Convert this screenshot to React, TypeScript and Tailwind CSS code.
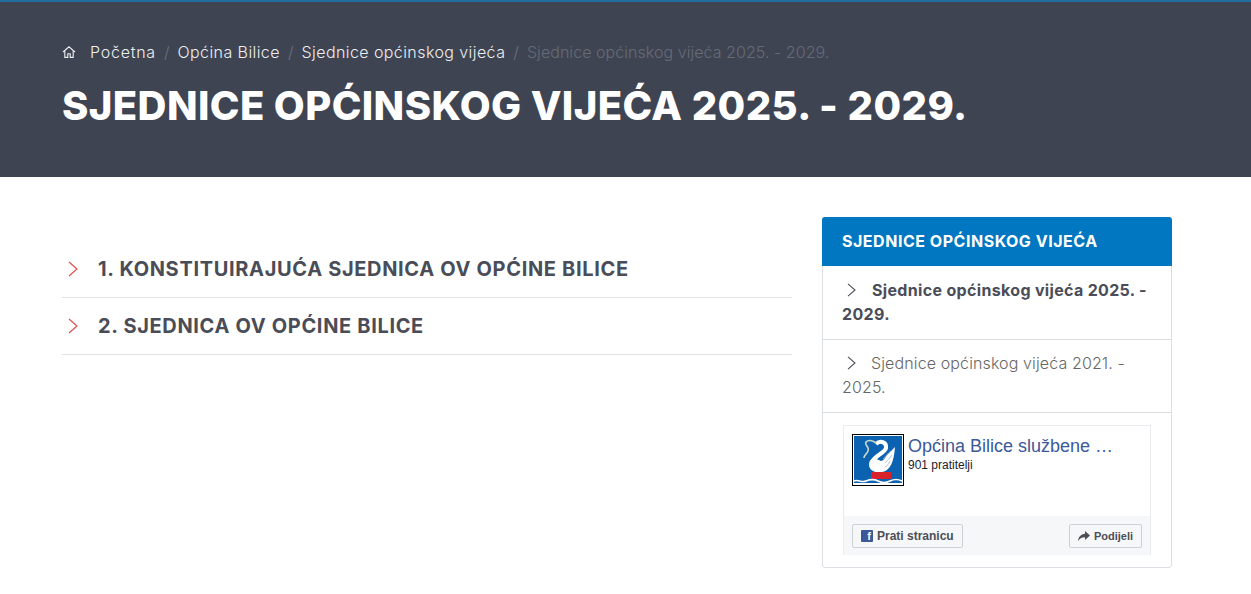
const font = "font-['Inter','Liberation_Sans',sans-serif]";

function Chevron({ className }: { className: string }) {
  return (
    <svg viewBox="0 0 10 16" fill="none" stroke="currentColor" strokeWidth="1.2" className={className}>
      <path d="M1 1l8 7-8 7" />
    </svg>
  );
}

function HomeIcon() {
  return (
    <svg viewBox="0 0 14 14" fill="none" stroke="currentColor" strokeWidth="1.1" className="w-[14px] h-[14px] mr-[14px]">
      <path d="M1 7l6-5.2L13 7M2.8 6v6.4h3v-3.600h2.400v3.600h3V6" />
    </svg>
  );
}

function Swan() {
  return (
    <svg viewBox="0 0 52 52" className="w-[52px] h-[52px] shrink-0">
      <rect width="52" height="52" fill="#000" />
      <rect x="1" y="1" width="50" height="50" fill="#fff" />
      <rect x="2" y="2" width="48" height="47" fill="#0b62b0" />
      <path d="M24 10C28 6 35 8 34 14C33 19 22 22 20 28" fill="none" stroke="#fff" strokeWidth="4" />
      <path d="M17 30C17 38 25 39 30 38C38 37 42 28 43 13C40 16 37 19 35 21C33 24 31 27 29 27C26 26 24 24 22 24C19 25 17 27 17 30Z" fill="#fff" />
      <path d="M31 25c2-2 5-6 8-8M33 29c2-2 5-5 7-8M33 33c2-1 4-3 5-6" fill="none" stroke="#9fb4cc" strokeWidth="0.8" />
      <path d="M24 9C20 6 16 6 14 8C12 11 18 13 16 17C15 20 12 21 12 24" fill="none" stroke="#c9d6c8" strokeWidth="1.6" />
      <rect x="19" y="38" width="20" height="7" fill="#d8232a" />
      <path d="M2 47c4-2 7 2 12 0s8-2 12 0 8 2 12 0 8-2 12 0" fill="none" stroke="#fff" strokeWidth="1.6" />
    </svg>
  );
}

const crumbs = ["Općina Bilice", "Sjednice općinskog vijeća"];
const rows = ["1. KONSTITUIRAJUĆA SJEDNICA OV OPĆINE BILICE", "2. SJEDNICA OV OPĆINE BILICE"];

export default function App() {
  return (
    <div className={`${font} min-h-[594px] bg-white`}>
      <header className="h-[177px] bg-[#3f4452] border-t-2 border-[#1f6d9c] pl-[62px] pt-[39px]">
        <nav className="flex items-center h-[22px] text-[16px] font-light text-[#eceef0]">
          <HomeIcon />
          <span className="tracking-[0.75px]">Početna</span>
          {crumbs.map((c) => (
            <span key={c} className="flex">
              <span className="px-[8px] text-[#6c707b]">/</span>
              <span className="tracking-[0.42px]">{c}</span>
            </span>
          ))}
          <span className="px-[8px] text-[#6c707b]">/</span>
          <span className="text-[#666b77] tracking-[0.05px]">Sjednice općinskog vijeća 2025. - 2029.</span>
        </nav>
        <h1 className="mt-[20px] text-[40px] leading-[46px] font-extrabold text-white tracking-[0.4px]">
          SJEDNICE OPĆINSKOG VIJEĆA 2025. - 2029.
        </h1>
      </header>

      <main className="flex gap-[30px] pl-[62px] pt-[40px]">
        <section className="w-[730px] pt-[24px]">
          {rows.map((r) => (
            <div key={r} className="flex items-center h-[57px] border-b border-[#e0e2e5] pb-[1px]">
              <Chevron className="w-[10px] h-[16px] ml-[6px] mr-[20px] text-[#d9534f]" />
              <span className="text-[20px] font-bold text-[#4a4d58] tracking-[0.66px]">{r}</span>
            </div>
          ))}
        </section>

        <aside className="w-[350px] h-[351px] border border-[#dcdfe3] rounded-[3px]">
          <h3 className="-m-px mb-0 h-[49px] flex items-center px-[20px] pb-[2px] bg-[#0077c0] rounded-t-[3px] text-[16px] font-bold text-white tracking-[0.52px]">
            SJEDNICE OPĆINSKOG VIJEĆA
          </h3>
          <div className="h-[74px] border-b border-[#dcdfe3] px-[19px] py-[12px] text-[16px] leading-[24px] font-bold text-[#4a4d58] tracking-[0.33px]">
            <Chevron className="inline w-[9px] h-[14px] ml-[5px] mr-[16px] -mt-[3px] text-[#4a4d58]" />
            Sjednice općinskog vijeća 2025. - 2029.
          </div>
          <div className="h-[73px] border-b border-[#dcdfe3] px-[19px] py-[11px] text-[16px] leading-[24px] font-light text-[#666666] tracking-[0.12px]">
            <Chevron className="inline w-[9px] h-[14px] ml-[5px] mr-[15px] -mt-[3px] text-[#4a4d58]" />
            Sjednice općinskog vijeća 2021. - 2025.
          </div>
          <div className="mx-[20px] mt-[12px] h-[130px] w-[308px] border border-[#e9ebee] border-b-0 font-['Liberation_Sans',sans-serif] flex flex-col">
            <div className="flex-1 flex gap-[4px] pl-[8px] pt-[8px]">
              <Swan />
              <div>
                <div className="text-[18px] leading-[24px] text-[#3b5998]">Općina Bilice službene …</div>
                <div className="text-[12px] leading-[14px] text-[#1d2129]">901 pratitelji</div>
              </div>
            </div>
            <div className="h-[39px] bg-[#f6f7f9] flex items-start justify-between px-[8px] pt-[8px]">
              <button className="h-[24px] flex items-center gap-[4px] px-[8px] bg-[#f6f7f9] border border-[#ced0d4] rounded-[2px] text-[12px] font-bold text-[#4b4f56]">
                <span className="w-[12px] h-[12px] bg-[#3b5998] rounded-[1px] flex items-end justify-end pr-[2px] text-[11px] leading-[11px] text-white">f</span>
                Prati stranicu
              </button>
              <button className="h-[24px] flex items-center gap-[4px] px-[8px] bg-[#f6f7f9] border border-[#ced0d4] rounded-[2px] text-[11px] font-bold text-[#4b4f56]">
                <svg viewBox="0 0 12 10" className="w-[12px] h-[10px]" fill="#4b4f56"><path d="M7 0l5 4.500L7 9V6.300C4 6.300 2 7.300 0 10c.5-4 2.800-6.800 7-7.300z" /></svg>
                Podijeli
              </button>
            </div>
          </div>
        </aside>
      </main>
    </div>
  );
}
